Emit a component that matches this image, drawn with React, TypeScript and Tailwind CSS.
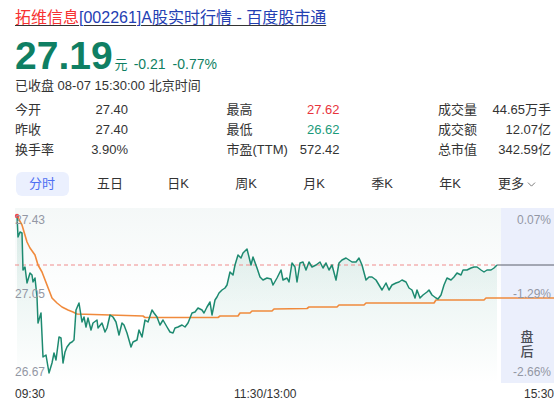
import { ChevronDown } from 'lucide-react';

const stats = [
  [
    { label: '今开', value: '27.40' },
    { label: '昨收', value: '27.40' },
    { label: '换手率', value: '3.90%' },
  ],
  [
    { label: '最高', value: '27.62', tone: 'up' },
    { label: '最低', value: '26.62', tone: 'down' },
    { label: '市盈(TTM)', value: '572.42' },
  ],
  [
    { label: '成交量', value: '44.65万手' },
    { label: '成交额', value: '12.07亿' },
    { label: '总市值', value: '342.59亿' },
  ],
];

const tabs = ['分时', '五日', '日K', '周K', '月K', '季K', '年K'];

// price trace, in page pixels (x, y)
const price = [
  [17, 215], [18, 237], [20, 232], [22, 233], [23, 270], [25, 267], [27, 283], [30, 273], [32, 275],
  [33, 282], [35, 278], [37, 297], [38, 323], [41, 313], [43, 357], [46, 355], [49, 373], [52, 363],
  [54, 353], [56, 360], [59, 337], [61, 338], [63, 363], [65, 352], [67, 347], [70, 343], [72, 342],
  [74, 340], [76, 310], [79, 303], [82, 322], [84, 317], [86, 327], [88, 318], [91, 330], [93, 323],
  [97, 320], [98, 328], [102, 323], [105, 332], [107, 328], [110, 315], [113, 317], [116, 322],
  [119, 335], [122, 323], [124, 325], [127, 333], [131, 347], [133, 342], [137, 340], [139, 330],
  [142, 337], [145, 320], [148, 322], [152, 310], [154, 313], [157, 317], [160, 325], [163, 320],
  [167, 327], [170, 332], [173, 333], [175, 328], [178, 327], [182, 325], [185, 327], [188, 323],
  [192, 313], [195, 312], [198, 308], [202, 310], [204, 313], [207, 307], [210, 302], [212, 315],
  [215, 300], [217, 297], [219, 293], [222, 290], [225, 288], [227, 285], [230, 272], [233, 275],
  [235, 265], [238, 255], [241, 258], [243, 253], [247, 249], [251, 265], [253, 257], [257, 268],
  [260, 277], [263, 280], [267, 278], [271, 279], [273, 285], [277, 278], [281, 270], [283, 280],
  [287, 278], [289, 282], [292, 263], [295, 267], [297, 282], [300, 263], [303, 262], [306, 270],
  [309, 262], [312, 267], [316, 265], [320, 262], [323, 268], [326, 263], [329, 270], [332, 265],
  [336, 280], [339, 263], [342, 260], [346, 258], [349, 260], [352, 262], [356, 262], [359, 258],
  [362, 265], [366, 280], [369, 277], [372, 277], [376, 280], [379, 285], [382, 290], [386, 283],
  [389, 290], [392, 285], [396, 283], [399, 282], [402, 280], [406, 282], [409, 288], [412, 290],
  [415, 298], [417, 290], [420, 298], [423, 295], [427, 292], [429, 290], [432, 295], [436, 298],
  [438, 299], [441, 295], [444, 285], [447, 278], [451, 280], [454, 277], [457, 273], [461, 275],
  [463, 270], [467, 270], [471, 268], [474, 267], [477, 267], [481, 270], [484, 272], [487, 270],
  [491, 270], [494, 268], [497, 265],
];

// average price
const average = [
  [17, 216], [22, 225], [27, 242], [30, 248], [35, 255], [38, 265], [42, 272], [47, 285], [52, 298],
  [57, 303], [62, 307], [68, 310], [73, 312], [77, 314], [110, 315], [143, 316], [145, 317.5],
  [218, 317.5], [220, 316], [238, 316], [240, 313], [250, 313], [252, 311], [272, 311], [274, 309],
  [307, 308.5], [309, 307], [337, 307], [339, 305], [364, 305], [366, 303], [434, 303], [436, 300],
  [484, 300], [486, 298], [554, 298],
];

const toPath = (pts: number[][]) => pts.map((p, i) => `${i ? 'L' : 'M'}${p[0]} ${p[1]}`).join(' ');

function Chart() {
  const line = toPath(price);
  const area = `${line} L497 383 L17 383 Z`;
  return (
    <div className="relative h-[175px] w-full">
      <svg className="absolute inset-0" width="554" height="175" viewBox="0 208 554 175">
        <defs>
          <linearGradient id="area" x1="0" y1="208" x2="0" y2="383" gradientUnits="userSpaceOnUse">
            <stop offset="0" stopColor="#1a8a70" stopOpacity="0.15" />
            <stop offset="1" stopColor="#1a8a70" stopOpacity="0" />
          </linearGradient>
          <linearGradient id="bg" x1="0" y1="208" x2="0" y2="383" gradientUnits="userSpaceOnUse">
            <stop offset="0" stopColor="#4a8a86" stopOpacity="0.06" />
            <stop offset="0.55" stopColor="#4a8a86" stopOpacity="0" />
          </linearGradient>
        </defs>
        <rect x="15" y="208" width="486" height="175" fill="url(#bg)" />
        <rect x="501" y="208" width="53" height="175" fill="#ebeffc" />
        <path d={area} fill="url(#area)" />
        <line x1="15" y1="265" x2="497" y2="265" stroke="#f08c8c" strokeWidth="1" strokeDasharray="4 3" />
        <line x1="497" y1="265" x2="554" y2="265" stroke="#5a5f6a" strokeWidth="1" />
        <path d={toPath(average)} fill="none" stroke="#f08a3c" strokeWidth="1.6" strokeLinejoin="round" />
        <path d={line} fill="none" stroke="#1d8a70" strokeWidth="1.5" strokeLinejoin="round" />
        <circle cx="17" cy="216" r="2.2" fill="#f04848" />
      </svg>

      <div className="absolute left-[15px] top-[5px] text-[12px] leading-[14px] text-[#9397a4]">27.43</div>
      <div className="absolute left-[15px] top-[79px] text-[12px] leading-[14px] text-[#9397a4]">27.05</div>
      <div className="absolute left-[15px] top-[157px] text-[12px] leading-[14px] text-[#9397a4]">26.67</div>
      <div className="absolute right-[3px] top-[5px] text-[12px] leading-[14px] text-[#9397a4]">0.07%</div>
      <div className="absolute right-[3px] top-[79px] text-[12px] leading-[14px] text-[#9397a4]">-1.29%</div>
      <div className="absolute right-[3px] top-[157px] text-[12px] leading-[14px] text-[#9397a4]">-2.66%</div>
      <div className="absolute left-[520px] top-[121px] flex w-[14px] flex-col items-center text-[13px] font-medium leading-[15px] text-[#4a4d57]">
        <span>盘</span>
        <span>后</span>
      </div>
    </div>
  );
}

export default function App() {
  return (
    <div className="h-[409px] w-[554px] overflow-hidden bg-white font-['Liberation_Sans','Noto_Sans_CJK_SC',sans-serif] text-[#333]">
      <div className="pl-[15px] pr-[3px] pt-[8px]">
        <div className="text-[16px] leading-[20px] underline decoration-1 underline-offset-2">
          <span className="text-[#f73131] decoration-[#f73131]">拓维信息</span>
          <span className="text-[#2440b3] decoration-[#2440b3]">[002261]A股实时行情 - 百度股市通</span>
        </div>

        <div className="mt-[8px] flex items-baseline text-[#0f7f63]">
          <span className="text-[39px] font-bold leading-[40px]">27.19</span>
          <span className="ml-[2px] text-[13px]">元</span>
          <span className="ml-[6px] text-[14px]">-0.21</span>
          <span className="ml-[7px] text-[14px]">-0.77%</span>
        </div>

        <div className="text-[13px] leading-[20px]">已收盘 08-07 15:30:00 北京时间</div>

        <div className="mt-[4px] flex justify-between text-[13px]">
          {stats.map((col, i) => (
            <div key={i} className="w-[113px]">
              {col.map((s) => (
                <div key={s.label} className="flex h-[20px] items-center justify-between">
                  <span>{s.label}</span>
                  <span
                    className={
                      s.tone === 'up' ? 'text-[#e8343c]' : s.tone === 'down' ? 'text-[#1a9a7a]' : 'text-[#333]'
                    }
                  >
                    {s.value}
                  </span>
                </div>
              ))}
            </div>
          ))}
        </div>

        <div className="-ml-[7px] -mr-[1px] mt-[12px] grid grid-cols-8 text-[13px]">
          {tabs.map((t, i) => (
            <div key={t} className="flex h-[24px] items-center justify-center">
              {i === 0 ? (
                <span className="flex h-[24px] w-[53px] items-center justify-center rounded-[6px] bg-[#ebf0fe] text-[#4e6ef2]">
                  {t}
                </span>
              ) : (
                <span>{t}</span>
              )}
            </div>
          ))}
          <div className="flex h-[24px] items-center justify-center">
            <span>更多</span>
            <ChevronDown size={13} strokeWidth={1.6} className="ml-[1px] text-[#666]" />
          </div>
        </div>
      </div>

      <div className="mt-[12px]">
        <Chart />
        <div className="flex pl-[15px] text-[12px] leading-[22px] text-[#333]">
          <span>09:30</span>
          <span className="ml-[189px]">11:30/13:00</span>
          <span className="ml-auto">15:30</span>
        </div>
      </div>
    </div>
  );
}
